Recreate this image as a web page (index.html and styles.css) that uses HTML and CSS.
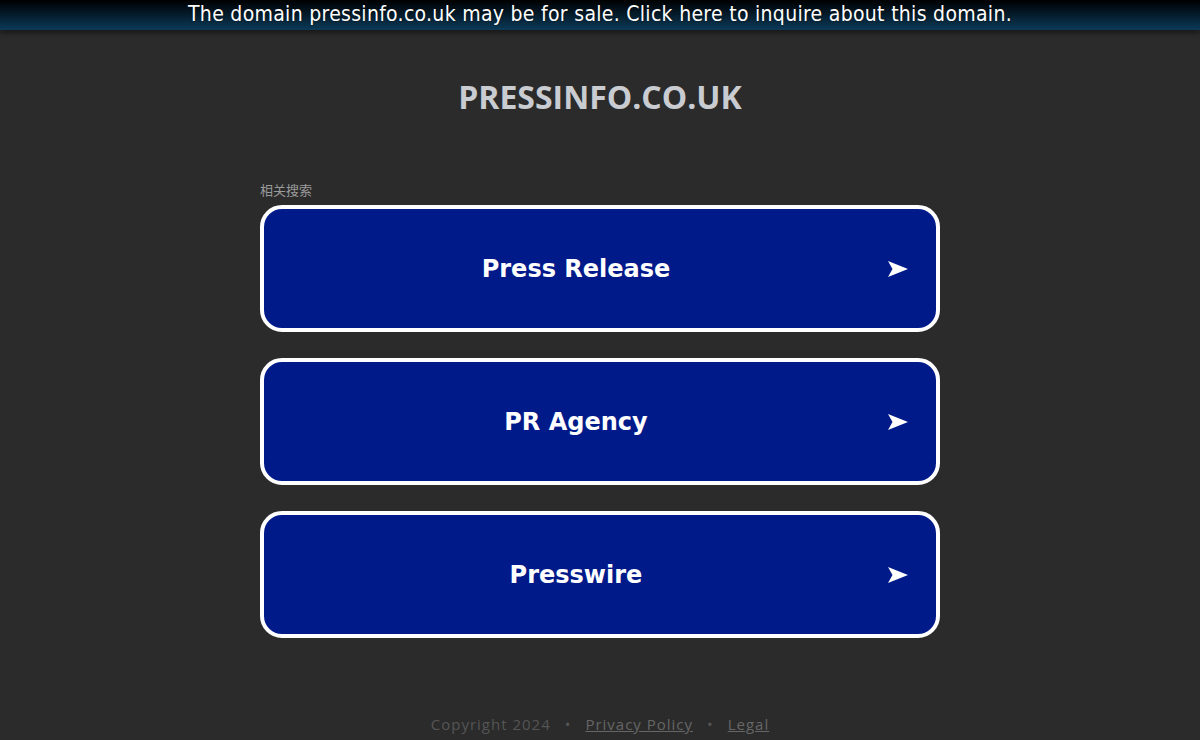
FILE: index.html
```html
<!DOCTYPE html>
<html lang="en">
<head>
<meta charset="utf-8">
<title>pressinfo.co.uk</title>
<link rel="stylesheet" href="styles.css">
</head>
<body>
<div class="banner"><a href="#" class="banner-link">The domain pressinfo.co.uk may be for sale. Click here to inquire about this domain.</a></div>
<main class="page">
  <h1 class="domain">PRESSINFO.CO.UK</h1>
  <section class="related">
    <div class="related-label">相关搜索</div>
    <div class="links">
      <a href="#" class="item"><span class="item-text">Press Release</span><svg class="arrow" viewBox="0 0 20 16" width="20" height="16"><path d="M0 0 L20 8 L0 16 L4.5 8 Z" fill="#fff"/></svg></a>
      <a href="#" class="item"><span class="item-text">PR Agency</span><svg class="arrow" viewBox="0 0 20 16" width="20" height="16"><path d="M0 0 L20 8 L0 16 L4.5 8 Z" fill="#fff"/></svg></a>
      <a href="#" class="item"><span class="item-text">Presswire</span><svg class="arrow" viewBox="0 0 20 16" width="20" height="16"><path d="M0 0 L20 8 L0 16 L4.5 8 Z" fill="#fff"/></svg></a>
    </div>
  </section>
  <footer class="footer">
    <span class="copy">Copyright 2024</span>
    <span class="dot">•</span>
    <a href="#" class="flink">Privacy Policy</a>
    <span class="dot">•</span>
    <a href="#" class="flink">Legal</a>
  </footer>
</main>
</body>
</html>
```

FILE: styles.css
```css
html, body {
  margin: 0;
  padding: 0;
}
body {
  background: #2b2b2b;
  font-family: "Open Sans", "Liberation Sans", sans-serif;
  height: 740px;
  overflow: hidden;
}
.banner {
  height: 30px;
  background: linear-gradient(to bottom, #000000 0%, #031420 35%, #0b3a58 100%);
  box-shadow: 0 3px 5px rgba(0,0,0,0.45);
  display: flex;
  align-items: center;
  justify-content: center;
  position: relative;
  z-index: 1;
}
.banner-link {
  color: #fff;
  text-decoration: none;
  font-family: "Liberation Sans Narrow", "DejaVu Sans Condensed", "Liberation Sans", sans-serif;
  font-size: 21px;
  line-height: 28px;
  margin-top: -2px;
  letter-spacing: 0.3px;
  text-shadow: 0 0 2px rgba(0,0,0,0.6);
}
.page {
  display: flex;
  flex-direction: column;
  align-items: center;
}
.domain {
  margin: 47px 0 0;
  font-family: "Open Sans", sans-serif;
  font-weight: 700;
  font-size: 32px;
  line-height: 40px;
  color: #c9ccd1;
}
.related {
  width: 680px;
  margin-top: 65px;
}
.related-label {
  font-family: "Noto Sans CJK SC", sans-serif;
  font-size: 13px;
  line-height: 16px;
  color: #9a9a9a;
  margin-bottom: 7px;
}
.links {
  display: flex;
  flex-direction: column;
  gap: 26px;
}
.item {
  box-sizing: border-box;
  height: 127px;
  border: 4px solid #fff;
  border-radius: 22px;
  background: #011a8a;
  display: flex;
  align-items: center;
  padding-right: 28px;
  text-decoration: none;
}
.item-text {
  flex: 1;
  text-align: center;
  color: #fff;
  font-family: "DejaVu Sans", Verdana, sans-serif;
  font-weight: 700;
  font-size: 24px;
}
.arrow {
  display: block;
  flex: none;
}
.footer {
  margin-top: 76px;
  font-family: "Open Sans", sans-serif;
  font-size: 15px;
  letter-spacing: 1px;
  color: #555;
  display: flex;
  gap: 14px;
}
.flink {
  color: #666;
  text-decoration: underline;
}
.dot {
  color: #555;
}
```
